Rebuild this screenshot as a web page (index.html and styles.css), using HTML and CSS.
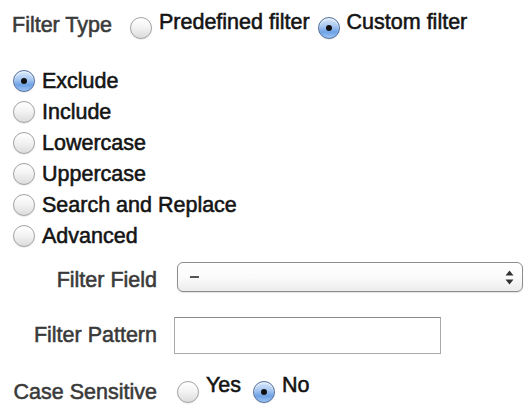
FILE: index.html
```html
<!DOCTYPE html>
<html>
<head>
<meta charset="utf-8">
<link rel="stylesheet" href="styles.css">
</head>
<body>
<div class="page">
  <div class="type-row">
    <span class="label">Filter Type</span>
    <span class="opt"><span class="radio"></span><span class="txt raise-a">Predefined filter</span></span>
    <span class="opt"><span class="radio on"></span><span class="txt raise-a">Custom filter</span></span>
  </div>

  <ul class="choices">
    <li class="opt"><span class="radio on"></span><span class="txt">Exclude</span></li>
    <li class="opt"><span class="radio"></span><span class="txt">Include</span></li>
    <li class="opt"><span class="radio"></span><span class="txt">Lowercase</span></li>
    <li class="opt"><span class="radio"></span><span class="txt">Uppercase</span></li>
    <li class="opt"><span class="radio"></span><span class="txt">Search and Replace</span></li>
    <li class="opt"><span class="radio"></span><span class="txt">Advanced</span></li>
  </ul>

  <div class="form">
    <span class="label field-label">Filter Field</span>
    <div class="select">
      <span class="dash"></span>
      <svg class="arrows" width="9" height="15" viewBox="0 0 9 15"><path d="M4.5 0.5 L8.5 5.5 L0.5 5.5 Z M4.5 14.5 L8.5 9.5 L0.5 9.5 Z" fill="#333"/></svg>
    </div>

    <span class="label pattern-label">Filter Pattern</span>
    <div class="input"></div>

    <span class="label case-label">Case Sensitive</span>
    <div class="case-opts">
      <span class="opt"><span class="radio"></span><span class="txt raise-b">Yes</span></span>
      <span class="opt"><span class="radio on"></span><span class="txt raise-b">No</span></span>
    </div>
  </div>
</div>
</body>
</html>
```

FILE: styles.css
```css
html, body {
  margin: 0;
  padding: 0;
  background: #ffffff;
}

.page {
  font-family: "Liberation Sans", Arial, Helvetica, sans-serif;
  font-size: 21.5px;
  color: #141414;
  padding-top: 12px;
  -webkit-text-stroke: 0.55px #141414;
}

.label {
  color: #3a3a3a;
  -webkit-text-stroke: 0.55px #3a3a3a;
}

.type-row {
  display: flex;
  align-items: center;
  height: 31px;
  padding-left: 12px;
}

.type-row .label {
  margin-top: -5px;
  margin-right: 18px;
}

.opt {
  display: flex;
  align-items: center;
}

.type-row .opt + .opt {
  margin-left: 8px;
}

.txt {
  line-height: 24px;
  margin-left: 7px;
}

.raise-a {
  margin-bottom: 11px;
}

.raise-b {
  margin-bottom: 14px;
}

.radio {
  box-sizing: border-box;
  width: 22px;
  height: 22px;
  border-radius: 50%;
  border: 1px solid #a3a3a3;
  background: linear-gradient(#ffffff 0%, #f4f4f4 45%, #dcdcdc 100%);
  box-shadow: inset 0 1px 1px rgba(255,255,255,0.9), 0 0.5px 1px rgba(0,0,0,0.15);
  flex: none;
  display: flex;
  align-items: center;
  justify-content: center;
}

.radio.on {
  border: 1px solid #4f6f9f;
  background: linear-gradient(#dbe9fb 0%, #a9c9f2 40%, #6ea2e6 70%, #9cc4f3 100%);
}

.radio.on::after {
  content: "";
  width: 6px;
  height: 6px;
  border-radius: 50%;
  background: #111;
}

.choices {
  list-style: none;
  margin: 22px 0 0 0;
  padding: 0 0 0 13px;
}

.choices .opt {
  height: 31px;
}

.form {
  display: grid;
  grid-template-columns: 157px 1fr;
  column-gap: 20px;
  margin-top: 11px;
  padding-right: 6px;
}

.form .label {
  text-align: right;
  white-space: nowrap;
}

.field-label {
  line-height: 30px;
  padding-top: 3px;
}

.select {
  box-sizing: border-box;
  height: 30px;
  border: 1.5px solid #8d8d8d;
  border-radius: 6px;
  background: linear-gradient(#ffffff 0%, #fbfbfb 50%, #ececec 100%);
  box-shadow: 0 1px 1px rgba(0,0,0,0.12);
  display: flex;
  align-items: center;
  justify-content: space-between;
  padding: 0 8px 0 12px;
}

.dash {
  width: 9px;
  height: 2px;
  background: #555;
}

.pattern-label {
  line-height: 37px;
  margin-top: 22px;
}

.input {
  box-sizing: border-box;
  margin-top: 22px;
  margin-left: -3px;
  width: 267px;
  height: 37px;
  border: 1.5px solid #a9a9a9;
  border-top-color: #8a8a8a;
  background: #fff;
}

.case-label {
  line-height: 30px;
  margin-top: 23px;
}

.case-opts {
  display: flex;
  align-items: center;
  height: 30px;
  margin-top: 23px;
}

.case-opts .opt + .opt {
  margin-left: 12px;
}
```
